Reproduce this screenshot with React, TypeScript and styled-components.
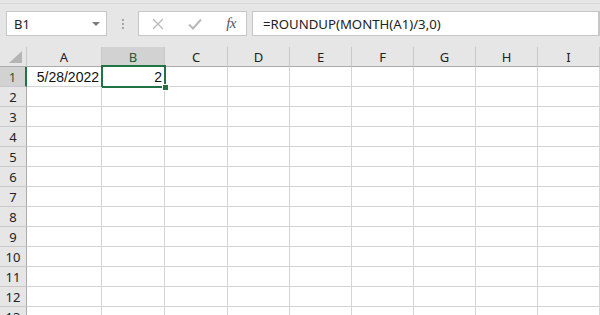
import React from 'react'
import styled, { createGlobalStyle } from 'styled-components'

const GlobalStyle = createGlobalStyle`
  html, body {
    margin: 0;
    padding: 0;
    background: #ffffff;
  }
  * {
    box-sizing: border-box;
  }
`

const COLUMNS = ['A', 'B', 'C', 'D', 'E', 'F', 'G', 'H', 'I']
const WIDTHS = [27, 75, 63, 63, 62, 62, 62, 62, 62, 62]
const ROWS = [1, 2, 3, 4, 5, 6, 7, 8, 9, 10, 11, 12, 13]

const cellValues: Record<string, string> = {
  A1: '5/28/2022',
  B1: '2',
}

const App = () => {
  return (
    <Sheet>
      <GlobalStyle />
      <FormulaBar>
        <NameBox>
          <NameText>B1</NameText>
          <DropArrow />
        </NameBox>
        <Splitter>
          <Dot />
          <Dot />
          <Dot />
        </Splitter>
        <ControlBox>
          <svg width="12" height="12" viewBox="0 0 12 12">
            <path d="M1 1 L11 11 M11 1 L1 11" stroke="#b9b9b9" strokeWidth="1.3" fill="none" />
          </svg>
          <svg width="14" height="12" viewBox="0 0 14 12">
            <path d="M1 6.5 L5 10.5 L13 1.5" stroke="#b9b9b9" strokeWidth="2" fill="none" />
          </svg>
          <Fx>fx</Fx>
        </ControlBox>
        <FormulaInput>=ROUNDUP(MONTH(A1)/3,0)</FormulaInput>
      </FormulaBar>

      <Grid>
        <Corner>
          <svg width="14" height="12" viewBox="0 0 14 12">
            <polygon points="13,0 13,12 0,12" fill="#b5b5b5" />
          </svg>
        </Corner>
        {COLUMNS.map((c) => (
          <ColHeader key={c} $active={c === 'B'}>
            {c}
          </ColHeader>
        ))}
        {ROWS.map((r) => (
          <React.Fragment key={r}>
            <RowHeader $active={r === 1}>{r}</RowHeader>
            {COLUMNS.map((c) => {
              const id = `${c}${r}`
              return (
                <Cell key={id} $selected={id === 'B1'}>
                  {cellValues[id]}
                  {id === 'B1' && <FillHandle />}
                </Cell>
              )
            })}
          </React.Fragment>
        ))}
      </Grid>
    </Sheet>
  )
}

const Sheet = styled.div`
  width: 600px;
  height: 315px;
  overflow: hidden;
  background: #e6e6e6;
  font-family: 'Noto Sans', 'Liberation Sans', sans-serif;
  color: #222222;
`

const FormulaBar = styled.div`
  display: flex;
  align-items: stretch;
  height: 47px;
  padding: 11px 0 11px 6px;
  border-top: 3px solid #e6e6e6;
  box-shadow: inset 0 3px 0 -2px #d9d9d9;
`

const NameBox = styled.div`
  width: 101px;
  height: 25px;
  margin-top: -3px;
  background: #ffffff;
  border: 1px solid #c6c6c6;
  display: flex;
  align-items: center;
  justify-content: space-between;
  padding: 0 6px 0 7px;
`

const NameText = styled.span`
  font-size: 13px;
  color: #222222;
`

const DropArrow = styled.span`
  width: 0;
  height: 0;
  border-left: 4px solid transparent;
  border-right: 4px solid transparent;
  border-top: 4px solid #7a7a7a;
`

const Splitter = styled.div`
  width: 31px;
  margin-top: -3px;
  display: flex;
  flex-direction: column;
  align-items: center;
  justify-content: center;
  gap: 2px;
`

const Dot = styled.span`
  width: 2px;
  height: 2px;
  background: #a6a6a6;
`

const ControlBox = styled.div`
  width: 109px;
  height: 25px;
  margin-top: -3px;
  background: #ffffff;
  border: 1px solid #c6c6c6;
  display: flex;
  align-items: center;
  justify-content: space-between;
  padding: 0 10px 0 13px;
`

const Fx = styled.span`
  font-family: 'Liberation Serif', serif;
  font-style: italic;
  font-size: 15px;
  color: #555555;
  letter-spacing: -0.5px;
`

const FormulaInput = styled.div`
  flex: 1;
  height: 25px;
  margin-top: -3px;
  margin-left: 5px;
  background: #ffffff;
  border: 1px solid #c6c6c6;
  border-right: 2px solid #c6c6c6;
  display: flex;
  align-items: center;
  padding-left: 10px;
  font-size: 13.2px;
  color: #222222;
`

const Grid = styled.div`
  display: grid;
  grid-template-columns: ${WIDTHS.map((w) => `${w}px`).join(' ')};
  grid-auto-rows: 20px;
  background: #ffffff;
`

const Corner = styled.div`
  background: #e6e6e6;
  border-right: 1px solid #c9c9c9;
  border-bottom: 1px solid #ababab;
  display: flex;
  align-items: flex-end;
  justify-content: flex-end;
  padding: 0 3px 3px 0;
`

const ColHeader = styled.div<{ $active?: boolean }>`
  background: ${(p) => (p.$active ? '#d2d2d2' : '#e6e6e6')};
  color: ${(p) => (p.$active ? '#1e5b38' : '#222222')};
  border-right: 1px solid #c9c9c9;
  border-bottom: ${(p) => (p.$active ? '2px solid #217346' : '1px solid #ababab')};
  display: flex;
  align-items: center;
  justify-content: center;
  font-size: 13px;
  padding-top: 1px;
`

const RowHeader = styled.div<{ $active?: boolean }>`
  background: ${(p) => (p.$active ? '#d2d2d2' : '#e6e6e6')};
  color: ${(p) => (p.$active ? '#1e5b38' : '#222222')};
  border-right: ${(p) => (p.$active ? '2px solid #217346' : '1px solid #ababab')};
  border-bottom: 1px solid #c9c9c9;
  display: flex;
  align-items: center;
  justify-content: center;
  font-size: 13px;
`

const Cell = styled.div<{ $selected?: boolean }>`
  position: relative;
  border-right: 1px solid #d4d4d4;
  border-bottom: 1px solid #d4d4d4;
  display: flex;
  align-items: center;
  justify-content: flex-end;
  padding: 0 2px 0 0;
  font-family: 'Liberation Sans', Arial, sans-serif;
  font-size: 14px;
  color: #111111;
  white-space: nowrap;

  ${(p) =>
    p.$selected &&
    `
    &::after {
      content: '';
      position: absolute;
      top: -2px;
      left: -1px;
      right: -2px;
      bottom: -2px;
      border: 2px solid #217346;
      pointer-events: none;
    }
  `}
`

const FillHandle = styled.span`
  position: absolute;
  right: -5px;
  bottom: -5px;
  width: 7px;
  height: 7px;
  background: #217346;
  border: 1px solid #ffffff;
  z-index: 2;
`

export default App
